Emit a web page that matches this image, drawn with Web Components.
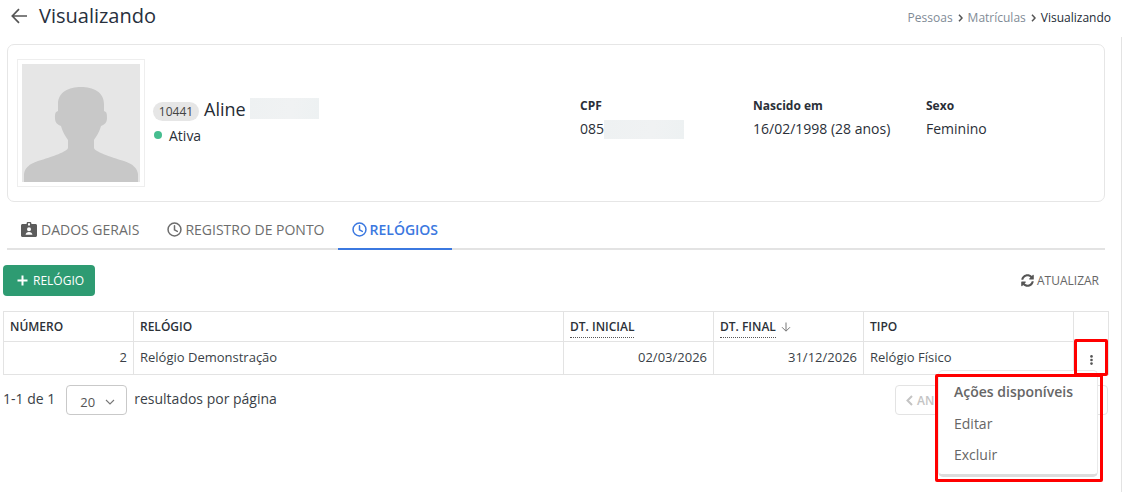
<!DOCTYPE html>
<html lang="pt-BR">
<head>
<meta charset="utf-8">
<title>Visualizando</title>
<style>
    html, body { margin: 0; padding: 0; background: #fff; }
    body { font-family: "Open Sans", "Liberation Sans", sans-serif; font-size: 14px; color: #333; }
</style>
</head>
<body>
<matricula-page></matricula-page>

<script>
const CLOCK_ICON = `<svg width="15" height="15" viewBox="0 0 16 16" fill="none" stroke="currentColor" stroke-width="1.6" stroke-linecap="round" stroke-linejoin="round"><circle cx="8" cy="8" r="6.9"/><path d="M8 3.9V8.4L11 10"/></svg>`;

class PageHeader extends HTMLElement {
    constructor() {
        super();
        this.attachShadow({ mode: 'open' });
    }

    connectedCallback() {
        this.shadowRoot.innerHTML = `
            <style>
                :host {
                    display: flex;
                    align-items: flex-start;
                    justify-content: space-between;
                    height: 37px;
                    padding: 0 11px;
                    box-sizing: border-box;
                }
                .title { display: flex; align-items: center; gap: 12px; height: 32px; }
                .title svg { display: block; }
                h1 { margin: 0; font-size: 20px; font-weight: 400; line-height: 32px; color: #27303d; }
                nav { font-size: 12px; line-height: 16px; padding-top: 10px; color: #7f8b96; display: flex; align-items: center; gap: 5px; }
                nav b { font-weight: 400; color: #222b36; }
                nav svg { display: block; }
            </style>
            <div class="title">
                <svg width="16" height="16" viewBox="0 0 16 16" fill="none" stroke="#555" stroke-width="1.7"><path d="M16 8H1.5M8 1.2 1.3 8 8 14.8"/></svg>
                <h1>${this.getAttribute('heading') || ''}</h1>
            </div>
            <nav>
                <span>Pessoas</span>
                <svg width="5" height="8" viewBox="0 0 5 8" fill="none" stroke="#555" stroke-width="1.5"><path d="M1 .8 4 4 1 7.2"/></svg>
                <span>Matrículas</span>
                <svg width="5" height="8" viewBox="0 0 5 8" fill="none" stroke="#555" stroke-width="1.5"><path d="M1 .8 4 4 1 7.2"/></svg>
                <b>Visualizando</b>
            </nav>
        `;
    }
}
customElements.define('page-header', PageHeader);

class InfoField extends HTMLElement {
    constructor() {
        super();
        this.attachShadow({ mode: 'open' });
    }

    connectedCallback() {
        this.shadowRoot.innerHTML = `
            <style>
                :host { display: block; width: 173px; margin-bottom: 10px; color: #2a2f38; }
                .label { font-size: 12px; font-weight: 700; line-height: 18px; height: 18px; }
                .value { font-size: 14px; line-height: 20px; margin-top: 4px; display: flex; }
            </style>
            <div class="label">${this.getAttribute('label') || ''}</div>
            <div class="value"><slot></slot></div>
        `;
    }
}
customElements.define('info-field', InfoField);

class PersonCard extends HTMLElement {
    constructor() {
        super();
        this.attachShadow({ mode: 'open' });
    }

    connectedCallback() {
        this.shadowRoot.innerHTML = `
            <style>
                :host {
                    display: flex;
                    align-items: center;
                    height: 158px;
                    margin: 0 3px 0 7px;
                    padding-left: 9px;
                    box-sizing: border-box;
                    border: 1px solid #e6e6e6;
                    border-radius: 7px;
                }
                .photo {
                    width: 118px;
                    height: 118px;
                    padding: 4px;
                    border: 1px solid #eeeeee;
                    background: #fff;
                    flex: none;
                }
                .photo svg { display: block; }
                .who { width: 427px; margin-left: 8px; flex: none; padding-bottom: 4px; box-sizing: border-box; }
                .name { display: flex; align-items: center; height: 24px; color: #252b35; font-size: 18px; }
                .badge {
                    display: inline-block;
                    width: 46px;
                    height: 19px;
                    margin-top: 4px;
                    margin-right: 5px;
                    border-radius: 10px;
                    background: #e6e6e6;
                    color: #444;
                    font-size: 12px;
                    line-height: 19px;
                    text-align: center;
                }
                .mask { width: 69px; height: 21px; margin-left: 4px; margin-top: -2px; }
                .status { display: flex; align-items: center; height: 20px; margin-top: 4px; font-size: 14px; color: #2a2f38; }
                .dot { width: 8px; height: 8px; border-radius: 50%; background: #46bd8f; margin: 0 7px 0 1px; }
            </style>
            <div class="photo">
                <svg width="118" height="118" viewBox="0 0 118 118">
                    <rect width="118" height="118" fill="#e6e6e6"/>
                    <path fill="#c8c8c8" d="M59 23C47 23 36 28 36 40V47C33 48 33 50 33 54C33 59 36 61 39 62C41 69 44 73 46 76V84C46 87 30 93 16 97C7 100 3 104 2 110V118H116V110C115 104 111 100 102 97C88 93 72 87 72 84V76C74 73 77 69 79 62C82 61 85 59 85 54C85 50 85 48 82 47V40C82 28 71 23 59 23Z"/>
                </svg>
            </div>
            <div class="who">
                <div class="name"><span class="badge">10441</span><span>Aline</span><redact-mask class="mask"></redact-mask></div>
                <div class="status"><span class="dot"></span>Ativa</div>
            </div>
            <slot></slot>
        `;
    }
}
customElements.define('person-card', PersonCard);

class RedactMask extends HTMLElement {
    constructor() {
        super();
        this.attachShadow({ mode: 'open' });
    }

    connectedCallback() {
        this.shadowRoot.innerHTML = `
            <style>
                :host { display: block; background: linear-gradient(100deg, #eef1f2, #f0f2f3 60%, #edf1f2); }
            </style>
        `;
    }
}
customElements.define('redact-mask', RedactMask);

class TabItem extends HTMLElement {
    constructor() {
        super();
        this.attachShadow({ mode: 'open' });
    }

    connectedCallback() {
        this.shadowRoot.innerHTML = `
            <style>
                :host {
                    display: flex;
                    align-items: center;
                    gap: 3px;
                    height: 48px;
                    padding: 8px 14px 0;
                    box-sizing: border-box;
                    border-bottom: 2px solid transparent;
                    font-size: 14px;
                    color: #6d6d6d;
                    white-space: nowrap;
                }
                :host([active]) { color: #3b78e0; font-weight: 600; border-bottom-color: #3b78e0; }
                ::slotted(svg) { display: block; }
            </style>
            <slot></slot>
        `;
    }
}
customElements.define('tab-item', TabItem);

class TabBar extends HTMLElement {
    constructor() {
        super();
        this.attachShadow({ mode: 'open' });
    }

    connectedCallback() {
        this.shadowRoot.innerHTML = `
            <style>
                :host {
                    display: flex;
                    height: 48px;
                    margin: 0 3px 0 7px;
                    box-sizing: border-box;
                    border-bottom: 2px solid #e3e3e3;
                }
                .inner { display: flex; height: 48px; }
            </style>
            <div class="inner"><slot></slot></div>
        `;
    }
}
customElements.define('tab-bar', TabBar);

class ActionBar extends HTMLElement {
    constructor() {
        super();
        this.attachShadow({ mode: 'open' });
    }

    connectedCallback() {
        this.shadowRoot.innerHTML = `
            <style>
                :host {
                    display: flex;
                    align-items: center;
                    justify-content: space-between;
                    height: 31px;
                    margin-top: 15px;
                    margin-right: 9px;
                }
                .add {
                    display: flex;
                    align-items: center;
                    gap: 5px;
                    width: 92px;
                    height: 31px;
                    padding-left: 14px;
                    box-sizing: border-box;
                    background: #2e9b72;
                    border-radius: 4px;
                    color: #fff;
                    font-size: 12px;
                }
                .refresh { display: flex; align-items: center; gap: 3px; font-size: 12px; color: #666; }
                svg { display: block; }
            </style>
            <div class="add">
                <svg width="11" height="11" viewBox="0 0 11 11" stroke="#fff" stroke-width="2"><path d="M5.5 .5v10M.5 5.5h10"/></svg>
                RELÓGIO
            </div>
            <div class="refresh">
                <svg width="13" height="13" viewBox="0 0 512 512" fill="#555"><path d="M370.72 133.28C339.458 104.008 298.888 87.962 255.848 88c-77.458.068-144.328 53.178-162.791 126.85-1.344 5.363-6.122 9.15-11.651 9.15H24.103c-7.498 0-13.194-6.807-11.807-14.176C33.933 94.924 134.813 8 256 8c66.448 0 126.791 26.136 171.315 68.685L463.03 40.97C478.149 25.851 504 36.559 504 57.941V192c0 13.255-10.745 24-24 24H345.941c-21.382 0-32.09-25.851-16.971-40.971l41.75-41.749zM32 296h134.059c21.382 0 32.09 25.851 16.971 40.971l-41.75 41.75c31.262 29.273 71.835 45.319 114.876 45.28 77.418-.07 144.315-53.144 162.787-126.849 1.344-5.363 6.122-9.15 11.651-9.15h57.304c7.498 0 13.194 6.807 11.807 14.176C478.067 417.076 377.187 504 256 504c-66.448 0-126.791-26.136-171.315-68.685L48.97 471.03C33.851 486.149 8 475.441 8 454.059V320c0-13.255 10.745-24 24-24z"/></svg>
                ATUALIZAR
            </div>
        `;
    }
}
customElements.define('action-bar', ActionBar);

class ClockTable extends HTMLElement {
    constructor() {
        super();
        this.attachShadow({ mode: 'open' });
    }

    connectedCallback() {
        this.shadowRoot.innerHTML = `
            <style>
                :host { display: block; margin-top: 15px; }
                table { border-collapse: collapse; table-layout: fixed; width: 1105px; font-size: 13px; color: #333; }
                th, td { border: 1px solid #e3e3e3; padding: 0 6px; box-sizing: border-box; overflow: hidden; white-space: nowrap; }
                th { height: 30px; text-align: left; font-size: 12px; font-weight: 600; color: #2c3138; }
                td { height: 33px; padding-bottom: 2px; color: #3a3f47; }
                .num { text-align: right; }
                .hint { border-bottom: 1px dotted #555; padding-bottom: 2px; }
                .sort { display: inline-block; vertical-align: -1px; margin-left: 2px; }
                .dots { display: block; margin: 5px auto 0; }
            </style>
            <table>
                <colgroup>
                    <col style="width:130px"><col style="width:430px"><col style="width:150px">
                    <col style="width:150px"><col style="width:210px"><col style="width:35px">
                </colgroup>
                <thead>
                    <tr>
                        <th>NÚMERO</th>
                        <th>RELÓGIO</th>
                        <th><span class="hint">DT. INICIAL</span></th>
                        <th><span class="hint">DT. FINAL</span> <svg class="sort" width="10" height="10" viewBox="0 0 10 10" fill="none" stroke="#777" stroke-width="1"><path d="M5 .5V9M1 5.2 5 9.2 9 5.2"/></svg></th>
                        <th>TIPO</th>
                        <th></th>
                    </tr>
                </thead>
                <tbody>
                    <tr>
                        <td class="num">2</td>
                        <td>Relógio Demonstração</td>
                        <td class="num">02/03/2026</td>
                        <td class="num">31/12/2026</td>
                        <td>Relógio Físico</td>
                        <td><svg class="dots" width="3" height="10" viewBox="0 0 3 10" fill="#555"><circle cx="1.5" cy="1.4" r="1.3"/><circle cx="1.5" cy="5" r="1.3"/><circle cx="1.5" cy="8.6" r="1.3"/></svg></td>
                    </tr>
                </tbody>
            </table>
        `;
    }
}
customElements.define('clock-table', ClockTable);

class PagerBar extends HTMLElement {
    constructor() {
        super();
        this.attachShadow({ mode: 'open' });
    }

    connectedCallback() {
        this.shadowRoot.innerHTML = `
            <style>
                :host {
                    display: flex;
                    align-items: center;
                    height: 30px;
                    margin-top: 10px;
                    font-size: 14px;
                    color: #3a3f47;
                }
                .txt { padding-bottom: 3px; }
                .select {
                    display: flex;
                    align-items: center;
                    justify-content: space-between;
                    width: 61px;
                    height: 30px;
                    margin: 0 7px 0 11px;
                    padding: 3px 11px 0 13px;
                    box-sizing: border-box;
                    border: 1px solid #c9c9c9;
                    border-radius: 4px;
                    font-size: 13px;
                    color: #555;
                }
                .prev {
                    display: flex;
                    align-items: center;
                    gap: 4px;
                    margin-left: auto;
                    width: 213px;
                    height: 30px;
                    padding-left: 10px;
                    box-sizing: border-box;
                    border: 1px solid #e3e3e3;
                    border-radius: 4px;
                    font-size: 12px;
                    font-weight: 600;
                    color: #c4c4c4;
                }
                svg { display: block; }
            </style>
            <span class="txt">1-1 de 1</span>
            <div class="select">20
                <svg width="10" height="6" viewBox="0 0 10 6" fill="none" stroke="#777" stroke-width="1.1"><path d="M1 1 5 5 9 1"/></svg>
            </div>
            <span class="txt">resultados por página</span>
            <div class="prev">
                <svg width="7" height="11" viewBox="0 0 7 11" fill="none" stroke="#c4c4c4" stroke-width="2"><path d="M6 1 1.5 5.5 6 10"/></svg>
                AN
            </div>
        `;
    }
}
customElements.define('pager-bar', PagerBar);

class ActionsMenu extends HTMLElement {
    constructor() {
        super();
        this.attachShadow({ mode: 'open' });
    }

    connectedCallback() {
        this.shadowRoot.innerHTML = `
            <style>
                :host {
                    position: absolute;
                    left: 938px;
                    top: 370px;
                    width: 160px;
                    height: 107px;
                    box-sizing: border-box;
                    padding: 5px 0 0 15px;
                    background: #fff;
                    border: 1px solid #eaeaea;
                    border-bottom: 3px solid #dcdcdc;
                    border-radius: 5px;
                    font-size: 14px;
                    color: #666;
                }
                div { height: 31px; line-height: 31px; }
                .head { font-weight: 600; height: 32px; line-height: 32px; }
            </style>
            <div class="head">Ações disponíveis</div>
            <div>Editar</div>
            <div>Excluir</div>
        `;
    }
}
customElements.define('actions-menu', ActionsMenu);

class RedBox extends HTMLElement {
    constructor() {
        super();
        this.attachShadow({ mode: 'open' });
    }

    connectedCallback() {
        this.shadowRoot.innerHTML = `
            <style>
                :host {
                    position: absolute;
                    box-sizing: border-box;
                    border: 3px solid #ff0000;
                    border-radius: 2px;
                    left: var(--x);
                    top: var(--y);
                    width: var(--w);
                    height: var(--h);
                }
            </style>
        `;
    }
}
customElements.define('red-box', RedBox);

class MatriculaPage extends HTMLElement {
    constructor() {
        super();
        this.attachShadow({ mode: 'open' });
    }

    connectedCallback() {
        this.shadowRoot.innerHTML = `
            <style>
                :host { display: block; position: relative; width: 1122px; height: 492px; overflow: hidden; }
                .content {
                    height: 455px;
                    padding: 7px 13px 0 0;
                    box-sizing: border-box;
                    border-right: 1px solid #e3e3e3;
                }
                .lower { padding-left: 3px; }
                .mask-cpf { width: 80px; height: 19px; margin-top: 1px; }
                tab-bar svg { display: block; flex: none; }
                .badge-icon { margin-right: 1px; }
                .last-tab { margin-left: -1px; }
            </style>
            <page-header heading="Visualizando"></page-header>
            <div class="content">
                <person-card>
                    <info-field label="CPF"><span>085</span><redact-mask class="mask-cpf"></redact-mask></info-field>
                    <info-field label="Nascido em">16/02/1998 (28 anos)</info-field>
                    <info-field label="Sexo">Feminino</info-field>
                </person-card>
                <tab-bar>
                    <tab-item>
                        <svg class="badge-icon" width="16" height="15" viewBox="0 0 16 15"><path fill="#5c5c5c" fill-rule="evenodd" d="M1.5 2H5.6V1.3C5.6.6 6.2 0 6.9 0H9.1C9.8 0 10.4.6 10.4 1.3V2H14.5C15.3 2 16 2.7 16 3.5V13.5C16 14.3 15.3 15 14.5 15H1.5C.7 15 0 14.3 0 13.5V3.5C0 2.7.7 2 1.5 2ZM7 1.2V3.6H9V1.2ZM8 5.2A2 2 0 1 0 8 9.2 2 2 0 0 0 8 5.2ZM4.6 12.8H11.4C11.4 11 9.9 9.9 8 9.9S4.6 11 4.6 12.8Z"/></svg>
                        DADOS GERAIS
                    </tab-item>
                    <tab-item>${CLOCK_ICON}REGISTRO DE PONTO</tab-item>
                    <tab-item class="last-tab" active>${CLOCK_ICON}RELÓGIOS</tab-item>
                </tab-bar>
                <div class="lower">
                    <action-bar></action-bar>
                    <clock-table></clock-table>
                    <pager-bar></pager-bar>
                </div>
            </div>
            <actions-menu></actions-menu>
            <red-box style="--x:1074px;--y:339px;--w:34px;--h:37px"></red-box>
            <red-box style="--x:935px;--y:374px;--w:168px;--h:108px"></red-box>
        `;
    }
}
customElements.define('matricula-page', MatriculaPage);
</script>
</body>
</html>
